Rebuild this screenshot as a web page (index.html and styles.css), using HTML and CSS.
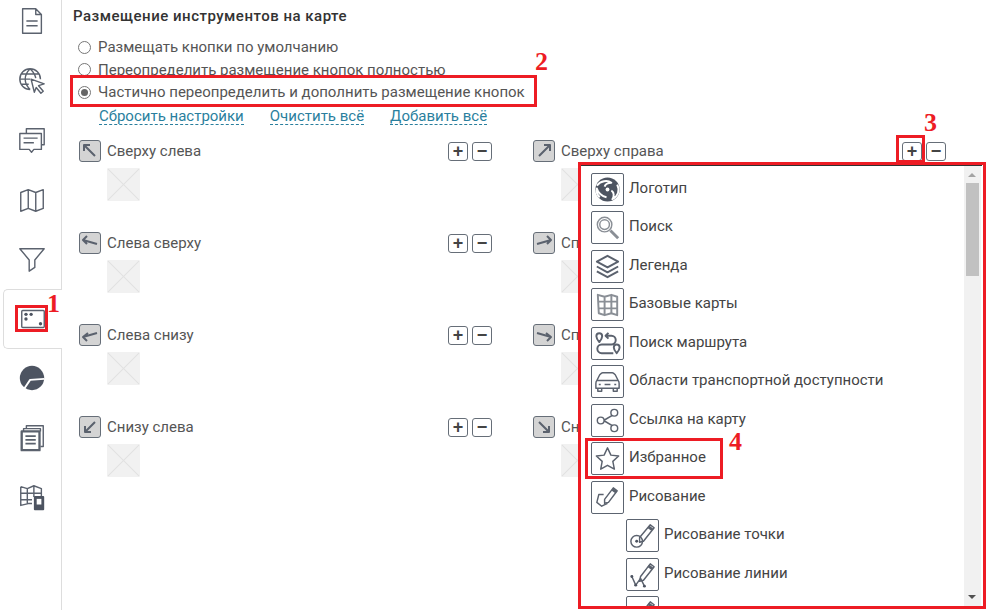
FILE: index.html
```html
<!DOCTYPE html>
<html lang="ru">
<head>
  <meta charset="UTF-8">
  <title>Размещение инструментов на карте</title>
  <link rel="stylesheet" href="styles.css">
</head>
<body>
  <nav class="sidebar">
    <div class="tab">
      <svg class="tab-icon" viewBox="0 0 32 32"><path d="M6 3h14l6 6v20H6z M20 3v6h6 M10 16h12 M10 21h12"/></svg>
    </div>
    <div class="tab">
      <svg class="tab-icon" viewBox="0 0 32 32"><path d="M14 25a11 11 0 1 1 11-11 M3 14h11 M4.500 8.500h19 M4.500 19.500h8 M14 3c-7 7-7 15 0 22 M14 3c4 4 5.500 7 6 10"/><path d="M15 14l14 5-6 2 5 6-2.500 2-5-6-2 5z" fill="#fff"/></svg>
    </div>
    <div class="tab">
      <svg class="tab-icon" viewBox="0 0 32 32"><path d="M10 9V4h19v17h-3"/><path d="M3 9h23v17h-8l-2.500 3-2.500-3H3z M7 14h15 M7 19h11" fill="#fff"/></svg>
    </div>
    <div class="tab">
      <svg class="tab-icon" viewBox="0 0 32 32"><path d="M4 8l8-3 8 3 8-3v20l-8 3-8-3-8 3z M12 5v20 M20 8v20"/></svg>
    </div>
    <div class="tab">
      <svg class="tab-icon" viewBox="0 0 32 32"><path d="M3 5h26L19 17v8l-6 4V17z"/></svg>
    </div>
    <div class="tab tab-active">
      <svg class="tab-icon" viewBox="0 0 32 32"><rect x="4" y="7" width="24" height="18" rx="1"/><g class="solid"><circle cx="8.500" cy="11" r="1.800"/><circle cx="14" cy="11" r="1.800"/><circle cx="8.500" cy="16" r="1.800"/><circle cx="24" cy="21" r="1.800"/></g></svg>
    </div>
    <div class="tab">
      <svg class="tab-icon" viewBox="0 0 32 32"><circle class="solid" cx="16" cy="16" r="13"/><path d="M8 27l6-9 15-1" stroke="#fff" stroke-width="2"/></svg>
    </div>
    <div class="tab">
      <svg class="tab-icon" viewBox="0 0 32 32"><path d="M10 6V3h18v22h-3 M7 9V6h18v3"/><rect x="5" y="9" width="19" height="20" fill="#fff" stroke-width="2.500"/><path d="M9 14h11 M9 18h11 M9 22h11" stroke-width="2"/></svg>
    </div>
    <div class="tab">
      <svg class="tab-icon" viewBox="0 0 32 32"><path d="M4 5l7 2 7-3 8 3v9 M4 5v20l8-2h4 M11 7v16 M18 4v12 M4 12h22 M4 19h12"/><rect class="solid" x="18" y="15" width="11" height="15" rx="1"/><rect x="21" y="18" width="5" height="6" fill="#fff" stroke="none"/></svg>
    </div>
  </nav>

  <main class="main">
    <h1 class="title">Размещение инструментов на карте</h1>

    <div class="options">
      <label class="radio"><span class="radio-mark"></span>Размещать кнопки по умолчанию</label>
      <label class="radio"><span class="radio-mark"></span>Переопределить размещение кнопок полностью</label>
      <label class="radio"><span class="radio-mark radio-on"></span>Частично переопределить и дополнить размещение кнопок</label>
    </div>

    <div class="links">
      <a class="link">Сбросить настройки</a>
      <a class="link">Очистить всё</a>
      <a class="link">Добавить всё</a>
    </div>

    <div class="zones">
      <section class="zone">
        <div class="zone-head">
          <span class="corner"><svg viewBox="0 0 20 20"><path d="M15 15L4 4 M4 10V4h6"/></svg></span>
          <span class="zone-name">Сверху слева</span>
          <span class="zone-btns"><button class="btn">+</button><button class="btn">−</button></span>
        </div>
        <div class="empty"></div>
      </section>
      <section class="zone">
        <div class="zone-head">
          <span class="corner"><svg viewBox="0 0 20 20"><path d="M5 15L16 4 M10 4h6v6"/></svg></span>
          <span class="zone-name">Сверху справа</span>
          <span class="zone-btns"><button class="btn">+</button><button class="btn">−</button></span>
        </div>
        <div class="empty"></div>
      </section>
      <section class="zone">
        <div class="zone-head">
          <span class="corner"><svg viewBox="0 0 20 20"><path d="M17 11L3 7 M7 3L3 7l4 4"/></svg></span>
          <span class="zone-name">Слева сверху</span>
          <span class="zone-btns"><button class="btn">+</button><button class="btn">−</button></span>
        </div>
        <div class="empty"></div>
      </section>
      <section class="zone">
        <div class="zone-head">
          <span class="corner"><svg viewBox="0 0 20 20"><path d="M3 11l14-4 M13 3l4 4-4 4"/></svg></span>
          <span class="zone-name zone-name-cut">Справа сверху</span>
        </div>
        <div class="empty"></div>
      </section>
      <section class="zone">
        <div class="zone-head">
          <span class="corner"><svg viewBox="0 0 20 20"><path d="M17 8L3 12 M8 8l-5 4 4 4"/></svg></span>
          <span class="zone-name">Слева снизу</span>
          <span class="zone-btns"><button class="btn">+</button><button class="btn">−</button></span>
        </div>
        <div class="empty"></div>
      </section>
      <section class="zone">
        <div class="zone-head">
          <span class="corner"><svg viewBox="0 0 20 20"><path d="M3 8l14 4 M12 8l5 4-4 4"/></svg></span>
          <span class="zone-name zone-name-cut">Справа снизу</span>
        </div>
        <div class="empty"></div>
      </section>
      <section class="zone">
        <div class="zone-head">
          <span class="corner"><svg viewBox="0 0 20 20"><path d="M15 5L5 15 M5 9v6h6"/></svg></span>
          <span class="zone-name">Снизу слева</span>
          <span class="zone-btns"><button class="btn">+</button><button class="btn">−</button></span>
        </div>
        <div class="empty"></div>
      </section>
      <section class="zone">
        <div class="zone-head">
          <span class="corner"><svg viewBox="0 0 20 20"><path d="M5 5l10 10 M15 9v6H9"/></svg></span>
          <span class="zone-name zone-name-cut">Снизу справа</span>
        </div>
        <div class="empty"></div>
      </section>
    </div>
  </main>

  <!-- выпадающий список кнопок -->
  <div class="menu">
    <ul class="menu-list">
      <li class="menu-item">
        <span class="tool"><svg viewBox="0 0 32 32"><circle class="solid" cx="16" cy="16" r="12.500"/><path class="swirl" d="M5 12c4-5 11-6 15-3-3 0-6 1-7 4 M26 11c3 6 1 12-5 15 2-3 2-7-1-9 M8 24c-3-3-4-6-3-9 1 4 5 8 10 9"/><circle cx="16" cy="16" r="2" fill="#fff" stroke="none"/></svg></span>
        <span class="tool-name">Логотип</span>
      </li>
      <li class="menu-item">
        <span class="tool"><svg class="light" viewBox="0 0 32 32"><circle cx="13" cy="13" r="7.500"/><circle cx="13" cy="13" r="5"/><path d="M19 19l8 8" stroke-width="3"/></svg></span>
        <span class="tool-name">Поиск</span>
      </li>
      <li class="menu-item">
        <span class="tool"><svg viewBox="0 0 32 32"><path d="M16 5l11 6-11 6-11-6z M5 16l11 6 11-6 M5 21l11 6 11-6" stroke-width="2"/></svg></span>
        <span class="tool-name">Легенда</span>
      </li>
      <li class="menu-item">
        <span class="tool"><svg class="light" viewBox="0 0 32 32"><path d="M6 6l7 2 7-2 6 2v19l-6-2-7 2-6-2z M13 8v19 M20 6v19 M6 13h20 M6 20h20" stroke-width="2"/></svg></span>
        <span class="tool-name">Базовые карты</span>
      </li>
      <li class="menu-item">
        <span class="tool"><svg viewBox="0 0 32 32"><g stroke-width="2"><path d="M7.500 14.500C5 11.500 4.500 10 4.500 8.500a3 3 0 0 1 6 0c0 1.500-.5 3-3 6z M17 5l-3 3 3 3 M14 8h6a4.500 4.500 0 0 1 0 9H10a4.500 4.500 0 0 0 0 9h12"/><path d="M25.500 26c-2.500-3-3-4.500-3-6a3 3 0 0 1 6 0c0 1.500-.5 3-3 6z" fill="#fff"/></g></svg></span>
        <span class="tool-name">Поиск маршрута</span>
      </li>
      <li class="menu-item">
        <span class="tool"><svg viewBox="0 0 32 32"><path d="M5 15l3-6c1-1 2-2 3-2h10c1 0 2 1 3 2l3 6 M5 15h22c1 1 1 2 1 3v5H4v-5c0-1 0-2 1-3z M6 23v3h4v-3 M22 23v3h4v-3 M13 19h6 M7 19h2 M23 19h2"/></svg></span>
        <span class="tool-name">Области транспортной доступности</span>
      </li>
      <li class="menu-item">
        <span class="tool"><svg viewBox="0 0 32 32"><path d="M12 16l12-7 M12 16l12 7"/><g fill="#fff"><circle cx="9" cy="16" r="3.500"/><circle cx="23" cy="8" r="3.500"/><circle cx="23" cy="24" r="3.500"/></g></svg></span>
        <span class="tool-name">Ссылка на карту</span>
      </li>
      <li class="menu-item">
        <span class="tool"><svg viewBox="0 0 32 32"><path d="M16 5l3.500 7.500 8 1-6 5.500 1.600 8L16 23l-7 4 1.500-8-6-5.500 8-1z"/></svg></span>
        <span class="tool-name">Избранное</span>
      </li>
      <li class="menu-item">
        <span class="tool"><svg viewBox="0 0 32 32"><path d="M13 18L22 6l4 3-9 12-4 1z" fill="#fff"/><path d="M21 7.500l4 3" stroke-width="3"/><path d="M12 13H7l-2 8 5 4 6-3"/></svg></span>
        <span class="tool-name">Рисование</span>
      </li>
      <li class="menu-item menu-sub">
        <span class="tool"><svg viewBox="0 0 32 32"><path d="M13 18L24 5l4 3-11 14-4 1z" fill="#fff"/><path d="M22 7l4 3" stroke-width="3"/><circle cx="10" cy="22" r="6"/><circle class="solid" cx="10" cy="22" r="1.500"/></svg></span>
        <span class="tool-name">Рисование точки</span>
      </li>
      <li class="menu-item menu-sub">
        <span class="tool"><svg viewBox="0 0 32 32"><path d="M14 18L24 5l4 3-11 14-4 1z" fill="#fff"/><path d="M22 7l4 3" stroke-width="3"/><path d="M5 18l4 9 5-7 4 8"/><g class="solid"><circle cx="5" cy="18" r="1.500"/><circle cx="9" cy="27" r="1.500"/><circle cx="18" cy="28" r="1.500"/></g></svg></span>
        <span class="tool-name">Рисование линии</span>
      </li>
      <li class="menu-item menu-sub">
        <span class="tool"><svg viewBox="0 0 32 32"><path d="M14 18L24 5l4 3-11 14-4 1z" fill="#fff"/><path d="M22 7l4 3" stroke-width="3"/></svg></span>
      </li>
    </ul>
    <div class="scrollbar">
      <span class="scroll-up"></span>
      <span class="scroll-thumb"></span>
      <span class="scroll-down"></span>
    </div>
  </div>

  <!-- пометки поверх скриншота -->
  <div class="mark mark-tab"></div>
  <div class="mark mark-radio"></div>
  <div class="mark mark-plus"></div>
  <div class="mark mark-menu"></div>
  <div class="mark mark-star"></div>
  <span class="num num-1">1</span>
  <span class="num num-2">2</span>
  <span class="num num-3">3</span>
  <span class="num num-4">4</span>
</body>
</html>
```

FILE: styles.css
```css
* {
  box-sizing: border-box;
}

body {
  position: relative;
  display: flex;
  width: 990px;
  height: 610px;
  margin: 0;
  overflow: hidden;
  background: #fff;
  color: #555;
  font-family: 'Roboto', 'Liberation Sans', sans-serif;
  font-size: 15px;
}

svg {
  display: block;
  fill: none;
  stroke: #5b626e;
  stroke-width: 1.5;
  stroke-linejoin: round;
}

svg .solid {
  fill: #4d5461;
  stroke: none;
}

/* sidebar */
.sidebar {
  flex: none;
  width: 62px;
  height: 610px;
  padding-left: 3px;
  border-right: 1px solid #ddd;
}

.tab {
  display: flex;
  align-items: center;
  justify-content: center;
  width: 58px;
  height: 59.500px;
}

.tab:first-child {
  margin-top: -8.500px;
}

.tab-active {
  width: 59px;
  background: #fff;
  border: 1px solid #ddd;
  border-right: none;
  border-radius: 5px 0 0 5px;
}

.tab-icon {
  width: 30px;
  height: 30px;
}

/* main */
.main {
  flex: 1;
  padding-left: 11px;
}

.title {
  margin: 0;
  padding-top: 8px;
  color: #333;
  font-size: 15px;
  font-weight: 500;
  line-height: 17px;
  letter-spacing: 0.500px;
}

.options {
  margin-top: 11px;
  padding-left: 5px;
}

.radio {
  display: flex;
  align-items: center;
  gap: 7px;
  height: 22.500px;
}

.radio-mark {
  position: relative;
  width: 13px;
  height: 13px;
  border: 1px solid #777;
  border-radius: 50%;
}

.radio-on::after {
  content: "";
  position: absolute;
  top: 2px;
  left: 2px;
  width: 7px;
  height: 7px;
  border-radius: 50%;
  background: #666;
}

.links {
  display: flex;
  gap: 26px;
  height: 22px;
  margin-top: 3px;
  padding-left: 26px;
  line-height: 19px;
}

.link {
  height: 18px;
  border-bottom: 1px dashed #2a7f9e;
  color: #2a7f9e;
}

/* zones */
.zones {
  display: grid;
  grid-template-columns: 414px 414px;
  grid-auto-rows: 92px;
  column-gap: 40px;
  margin-top: 11.500px;
  padding-left: 6px;
}

.zone-head {
  display: flex;
  align-items: center;
  gap: 6px;
  height: 22px;
}

.zone-name-cut {
  width: 17px;
  overflow: hidden;
  white-space: nowrap;
}

.zone-btns {
  display: flex;
  gap: 4px;
  margin-left: auto;
  padding-right: 1px;
}

.corner {
  display: block;
  width: 22px;
  height: 22px;
  border: 1px solid #666e78;
  border-radius: 3px;
  background: #d4d4d4;
}

.corner svg {
  width: 20px;
  height: 20px;
  stroke-width: 2;
}

.btn {
  width: 20px;
  height: 19px;
  padding: 0;
  border: 1px solid #666e78;
  border-radius: 3px;
  background: #fff;
  color: #444;
  font-family: 'Liberation Sans', sans-serif;
  font-size: 18px;
  font-weight: 700;
  line-height: 15px;
}

.empty {
  width: 33px;
  height: 33px;
  margin: 6px 0 0 28px;
  border-radius: 2px;
  background:
    linear-gradient(45deg, transparent calc(50% - 1px), #e2e2e2 50%, transparent calc(50% + 1px)),
    linear-gradient(-45deg, transparent calc(50% - 1px), #e2e2e2 50%, transparent calc(50% + 1px)),
    #f1f1f1;
}

/* dropdown */
.menu {
  position: absolute;
  top: 165px;
  left: 581px;
  display: flex;
  width: 401px;
  height: 442px;
  background: #fff;
  border-top: 1px solid #333;
  border-bottom: 1px solid #333;
}

.menu-list {
  flex: 1;
  height: 440px;
  margin: 0;
  padding: 4px 0 0 10px;
  overflow: hidden;
  list-style: none;
}

.menu-item {
  display: flex;
  align-items: center;
  gap: 5px;
  height: 38.500px;
  color: #444;
}

.menu-sub {
  padding-left: 35px;
}

.tool {
  flex: none;
  display: block;
  width: 33px;
  height: 33px;
  border: 1px solid #5c6470;
  border-radius: 2px;
  background: #fff;
}

.tool svg {
  width: 31px;
  height: 31px;
}

.tool svg.light {
  stroke: #8a8f96;
}

.tool .swirl {
  stroke: #fff;
  stroke-width: 2;
}

.tool-name {
  padding-bottom: 3px;
}

.scrollbar {
  position: relative;
  flex: none;
  width: 17px;
  margin-right: 1px;
  background: #f1f1f1;
}

.scroll-up,
.scroll-down {
  position: absolute;
  left: 4px;
  width: 0;
  height: 0;
  border-left: 4px solid transparent;
  border-right: 4px solid transparent;
}

.scroll-up {
  top: 7px;
  border-bottom: 4px solid #a3a3a3;
}

.scroll-down {
  bottom: 7px;
  border-top: 4px solid #505050;
}

.scroll-thumb {
  position: absolute;
  top: 17px;
  left: 2px;
  width: 13px;
  height: 93px;
  background: #c1c1c1;
}

/* annotations */
.mark {
  position: absolute;
  border: 3px solid #ed1c24;
}

.mark-tab {
  top: 305px;
  left: 15px;
  width: 33px;
  height: 27px;
}

.mark-radio {
  top: 75px;
  left: 70px;
  width: 467px;
  height: 32px;
}

.mark-plus {
  top: 135px;
  left: 896px;
  width: 29px;
  height: 28px;
}

.mark-menu {
  top: 162px;
  left: 578px;
  width: 408px;
  height: 447px;
}

.mark-star {
  top: 438px;
  left: 585px;
  width: 138px;
  height: 41px;
}

.num {
  position: absolute;
  color: #ed1c24;
  font-family: 'Liberation Serif', serif;
  font-size: 26px;
  font-weight: 700;
  line-height: 20px;
}

.num-1 {
  top: 294px;
  left: 47px;
}

.num-2 {
  top: 52px;
  left: 535px;
}

.num-3 {
  top: 113px;
  left: 924px;
}

.num-4 {
  top: 432px;
  left: 729px;
}
```
